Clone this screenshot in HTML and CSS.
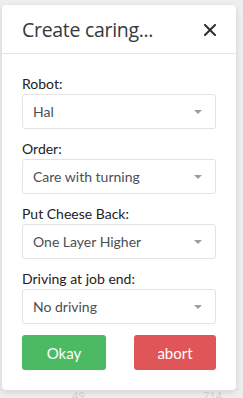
FILE: index.html
```html
<!DOCTYPE html>
<html>
<head>
<meta charset="utf-8">
<link rel="stylesheet" href="styles.css">
</head>
<body>
<div class="backdrop">
  <div class="bg-row"><span class="bg-num n1">49</span><span class="bg-num n2">714</span></div>
</div>
<div class="modal">
  <div class="modal-header">
    <h1 class="title">Create caring...</h1>
    <svg class="close" width="12" height="12" viewBox="0 0 12 12"><path d="M1 1 L11 11 M11 1 L1 11" stroke="#2b2f33" stroke-width="2" stroke-linecap="square"/></svg>
  </div>
  <div class="modal-body">
    <div class="group">
      <label class="label">Robot:</label>
      <div class="select"><span>Hal</span><i class="caret"></i></div>
    </div>
    <div class="group">
      <label class="label">Order:</label>
      <div class="select"><span>Care with turning</span><i class="caret"></i></div>
    </div>
    <div class="group">
      <label class="label">Put Cheese Back:</label>
      <div class="select"><span>One Layer Higher</span><i class="caret"></i></div>
    </div>
    <div class="group">
      <label class="label">Driving at job end:</label>
      <div class="select"><span>No driving</span><i class="caret"></i></div>
    </div>
    <div class="actions">
      <button class="btn btn-ok">Okay</button>
      <button class="btn btn-abort">abort</button>
    </div>
  </div>
</div>
</body>
</html>
```
FILE: styles.css
```css
html, body {
  margin: 0;
  padding: 0;
}
body {
  width: 243px;
  height: 398px;
  background: #eeeeee;
  font-family: Lato, "Open Sans", sans-serif;
  position: relative;
  overflow: hidden;
}
.backdrop {
  position: absolute;
  left: 0;
  top: 0;
  width: 243px;
  height: 398px;
}
.bg-row {
  position: absolute;
  left: 0;
  right: 0;
  top: 389px;
  height: 9px;
  border-top: 1px solid #e6e6e6;
}
.bg-num {
  position: absolute;
  top: 0;
  font-size: 11px;
  line-height: 11px;
  color: #d4d4d4;
}
.n1 { left: 72px; }
.n2 { left: 203px; }
.modal {
  position: absolute;
  left: 2px;
  top: 5px;
  width: 234px;
  background: #fff;
  border-radius: 4px;
  box-shadow: 0 2px 6px rgba(0, 0, 0, 0.12);
}
.modal-header {
  height: 48px;
  border-bottom: 1px solid #e5e5e5;
  display: flex;
  align-items: center;
  justify-content: space-between;
  padding: 0 20px;
}
.title {
  margin: 0;
  font-family: "Open Sans", sans-serif;
  font-weight: 400;
  font-size: 19.5px;
  color: #333a40;
  letter-spacing: -0.3px;
}
.close {
  display: block;
  margin-top: 1px;
}
.modal-body {
  padding: 20px 20px 20px;
}
.group {
  margin-bottom: 10px;
}
.label {
  display: block;
  font-size: 14px;
  line-height: 20px;
  color: #222;
}
.select {
  height: 33px;
  border: 1px solid #e3e3e3;
  border-radius: 3px;
  display: flex;
  align-items: center;
  justify-content: space-between;
  padding: 0 13px 0 10px;
  font-size: 14px;
  color: #4a4f55;
}
.caret {
  width: 0;
  height: 0;
  border-left: 4px solid transparent;
  border-right: 4px solid transparent;
  border-top: 4px solid #9a9ea3;
}
.actions {
  display: flex;
  justify-content: space-between;
  padding-top: 1px;
}
.btn {
  height: 35px;
  border: none;
  border-radius: 3px;
  color: #fff;
  font-family: Lato, "Open Sans", sans-serif;
  font-size: 15px;
  padding: 0;
}
.btn-ok {
  width: 84px;
  background: #4cb963;
}
.btn-abort {
  width: 82px;
  background: #e05558;
}
```
